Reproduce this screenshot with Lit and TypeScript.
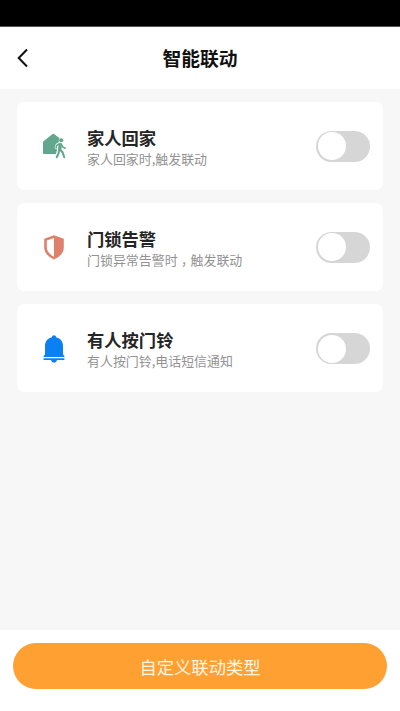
import { LitElement, html, svg, css } from "lit";
import { customElement, property, state } from "lit/decorators.js";

const home = svg`<svg viewBox="0 0 26 26" width="26" height="26">
  <path fill="#62a68e" d="M2 9.200Q2 8.600 2.500 8.200L11.600 1Q12.300 .500 13 1L18.600 5.300Q17.300 7 18 9L14.800 11 13.600 14.800Q13.500 16.500 16.200 16.600L14.800 21H3Q2 21 2 20Z"/>
  <circle cx="20.200" cy="7.300" r="2" fill="#62a68e"/>
  <g fill="none" stroke="#62a68e" stroke-linecap="round" stroke-linejoin="round">
    <path stroke-width="3.400" d="M19.200 11.500 18.800 16"/>
    <path stroke-width="1.500" d="M18 11 15.700 12.300 15 15M20.500 11.500 22 14.200 24.300 15.300"/>
    <path stroke-width="2" d="M18.400 16.500 17.500 20.500 15.700 24.300M19.400 16.800 21.700 19.500 23.200 24.200"/>
  </g>
</svg>`;

const shield = svg`<svg viewBox="0 0 26 26" width="26" height="26">
  <path fill="#df806b" fill-rule="evenodd" d="M13 1.200 22.800 4.800V13Q22.800 21 13 25.600 3.200 21 3.200 13V4.800ZM13 4 5.800 6.500V13Q5.800 19 13 22.700Z"/>
</svg>`;

const bell = svg`<svg viewBox="0 0 26 28" width="26" height="28">
  <path fill="#0b80f3" d="M13 0.300C14.200 0.300 14.900 1 15.100 2.200 19.500 3.200 22 6.400 22 10.800V19.200L23.400 21.200V22H2.600V21.200L4 19.200V10.800C4 6.400 6.500 3.200 10.900 2.200 11.100 1 11.800 0.300 13 0.300Z"/>
  <path fill="#0b80f3" d="M2.600 23.300H23.400V25H2.600ZM9.900 25H16.100Q15.400 27.700 13 27.700T9.900 25Z"/>
</svg>`;

@customElement("toggle-switch")
class ToggleSwitch extends LitElement {
  @property({ type: Boolean, reflect: true }) on = false;
  static styles = css`
    :host { display: block; flex: none; }
    .track {
      display: flex; align-items: center; box-sizing: border-box;
      width: 54px; height: 31px; padding: 0 1.500px; border: 0;
      border-radius: 16px; background: #d6d6d6; cursor: pointer;
    }
    .knob { width: 28px; height: 28px; border-radius: 50%; background: #fff; }
    :host([on]) .track { background: #ffa033; justify-content: flex-end; }
  `;
  render() {
    return html`<button class="track" role="switch" aria-checked=${this.on ? "true" : "false"}
      @click=${() => (this.on = !this.on)}><span class="knob"></span></button>`;
  }
}

@customElement("app-root")
class AppRoot extends LitElement {
  @state() private rules = [
    { icon: home, title: "家人回家", note: html`家人回家时,触发联动` },
    { icon: shield, title: "门锁告警", note: html`门锁异常告警时<span class="comma">，</span>触发联动` },
    { icon: bell, title: "有人按门铃", note: html`有人按门铃,电话短信通知` },
  ];

  static styles = css`
    :host {
      display: flex; flex-direction: column; height: 711px; background: #fff;
      font-family: "Noto Sans CJK SC", sans-serif; color: #252525;
    }
    .status { height: 26px; flex: none; background: #000; border-bottom: 1px solid #555; box-sizing: content-box; }
    .header {
      height: 62px; flex: none; display: grid;
      grid-template-columns: 46px 1fr 46px; align-items: center;
    }
    .back { display: block; margin-left: 15px; }
    .heading { margin: 0; text-align: center; font-size: 18.800px; line-height: 28px; font-weight: 700; color: #111; }
    .list {
      flex: 1; background: #f7f7f7; padding: 12.600px 17px 0;
      display: flex; flex-direction: column; gap: 13.300px;
    }
    .card {
      height: 88px; flex: none; box-sizing: border-box; background: #fff; border-radius: 7px;
      display: flex; align-items: center; padding: 1px 13px 0 24px;
    }
    .icon { width: 26px; display: flex; margin-right: 20px; }
    .text { flex: 1; padding-top: 1px; }
    .title { font-size: 17.300px; line-height: 23px; font-weight: 700; }
    .note { font-size: 12.940px; line-height: 19px; color: #929292; white-space: nowrap; }
    .comma { font-family: "Noto Sans CJK TC", sans-serif; line-height: 0; vertical-align: -4px; }
    .footer { height: 81px; flex: none; box-sizing: border-box; padding: 13px 13px 0; }
    .action {
      display: block; width: 100%; height: 46px; border: 0; border-radius: 23px; box-sizing: border-box;
      background: #ffa033; color: #fff6e0; font: 400 17.300px/44px "Noto Sans CJK SC", sans-serif; padding: 2px 0 0;
    }
  `;

  render() {
    return html`
      <div class="status"></div>
      <header class="header">
        <svg class="back" viewBox="0 0 16 22" width="16" height="22">
          <path d="M12 2.500 3.700 11 12 19.500" fill="none" stroke="#111" stroke-width="2"/>
        </svg>
        <h1 class="heading">智能联动</h1>
      </header>
      <main class="list">
        ${this.rules.map((r) => html`
          <section class="card">
            <div class="icon">${r.icon}</div>
            <div class="text">
              <div class="title">${r.title}</div>
              <div class="note">${r.note}</div>
            </div>
            <toggle-switch></toggle-switch>
          </section>`)}
      </main>
      <footer class="footer"><button class="action">自定义联动类型</button></footer>
    `;
  }
}
